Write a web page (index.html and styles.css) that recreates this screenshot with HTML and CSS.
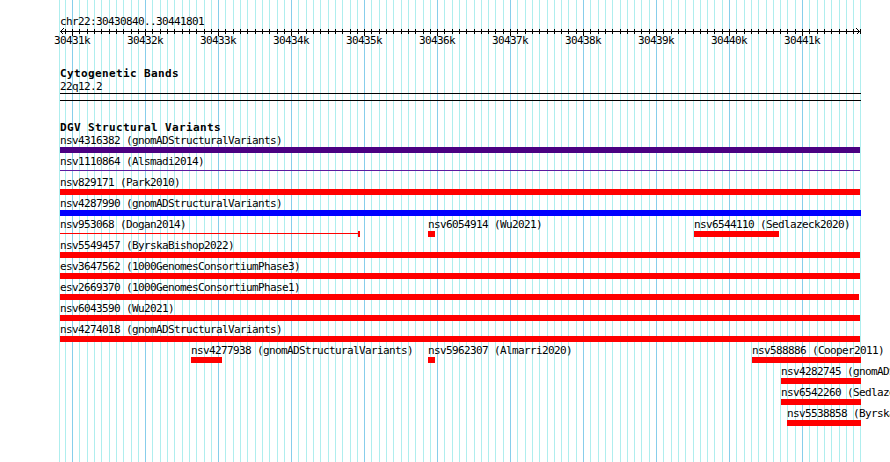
FILE: index.html
```html
<!DOCTYPE html>
<html lang="en">
<head>
    <meta charset="UTF-8">
    <title>chr22:30430840..30441801</title>
    <link rel="stylesheet" href="styles.css">
</head>
<body>
<div class="panel" id="panel">
    <div class="grid" id="grid"></div>
    <div class="content">
        <div class="chrom">chr22:30430840..30441801</div>
        <div class="axis" id="axis">
            <svg class="axis-line" width="801" height="8" viewBox="0 0 801 8">
                <line x1="0" y1="3.5" x2="800" y2="3.5" stroke="#000" stroke-width="1"/>
                <polyline points="3.5,0.5 0.5,3.5 3.5,6.5" fill="none" stroke="#000" stroke-width="1"/>
                <polyline points="796.5,0.5 799.5,3.5 796.5,6.5" fill="none" stroke="#000" stroke-width="1"/>
            </svg>
        </div>

        <div class="track-title">Cytogenetic Bands</div>
        <div class="band-name">22q12.2</div>
        <div class="band"></div>

        <div class="track-title dgv">DGV Structural Variants</div>
        <div class="rows">
            <div class="row">
                <div class="feat" style="left:0"><div class="feat-label">nsv4316382 (gnomADStructuralVariants)</div><div class="bar purple" style="width:800px"></div></div>
            </div>
            <div class="row">
                <div class="feat" style="left:0"><div class="feat-label">nsv1110864 (Alsmadi2014)</div><div class="bar thin purple" style="width:800px"></div></div>
            </div>
            <div class="row">
                <div class="feat" style="left:0"><div class="feat-label">nsv829171 (Park2010)</div><div class="bar red" style="width:800px"></div></div>
            </div>
            <div class="row">
                <div class="feat" style="left:0"><div class="feat-label">nsv4287990 (gnomADStructuralVariants)</div><div class="bar blue" style="width:801px"></div></div>
            </div>
            <div class="row">
                <div class="feat" style="left:0"><div class="feat-label">nsv953068 (Dogan2014)</div><div class="bar thin red end-tick" style="width:300px"></div></div>
                <div class="feat" style="left:368px"><div class="feat-label">nsv6054914 (Wu2021)</div><div class="bar red" style="width:7px"></div></div>
                <div class="feat" style="left:634px"><div class="feat-label">nsv6544110 (Sedlazeck2020)</div><div class="bar red" style="width:85px"></div></div>
            </div>
            <div class="row">
                <div class="feat" style="left:0"><div class="feat-label">nsv5549457 (ByrskaBishop2022)</div><div class="bar red" style="width:800px"></div></div>
            </div>
            <div class="row">
                <div class="feat" style="left:0"><div class="feat-label">esv3647562 (1000GenomesConsortiumPhase3)</div><div class="bar red" style="width:800px"></div></div>
            </div>
            <div class="row">
                <div class="feat" style="left:0"><div class="feat-label">esv2669370 (1000GenomesConsortiumPhase1)</div><div class="bar red" style="width:799px"></div></div>
            </div>
            <div class="row">
                <div class="feat" style="left:0"><div class="feat-label">nsv6043590 (Wu2021)</div><div class="bar red" style="width:800px"></div></div>
            </div>
            <div class="row">
                <div class="feat" style="left:0"><div class="feat-label">nsv4274018 (gnomADStructuralVariants)</div><div class="bar red" style="width:800px"></div></div>
            </div>
            <div class="row">
                <div class="feat" style="left:131px"><div class="feat-label">nsv4277938 (gnomADStructuralVariants)</div><div class="bar red" style="width:31px"></div></div>
                <div class="feat" style="left:368px"><div class="feat-label">nsv5962307 (Almarri2020)</div><div class="bar red" style="width:7px"></div></div>
                <div class="feat" style="left:692px"><div class="feat-label">nsv588886 (Cooper2011)</div><div class="bar red" style="width:109px"></div></div>
            </div>
            <div class="row">
                <div class="feat" style="left:721px"><div class="feat-label">nsv4282745 (gnomADStructuralVariants)</div><div class="bar red" style="width:80px"></div></div>
            </div>
            <div class="row">
                <div class="feat" style="left:721px"><div class="feat-label">nsv6542260 (Sedlazeck2020)</div><div class="bar red" style="width:80px"></div></div>
            </div>
            <div class="row">
                <div class="feat" style="left:727px"><div class="feat-label">nsv5538858 (ByrskaBishop2022)</div><div class="bar red" style="width:74px"></div></div>
            </div>
        </div>
    </div>
</div>
<script src="script.js"></script>
</body>
</html>
```

FILE: styles.css
```css
* {
    margin: 0;
    padding: 0;
    box-sizing: border-box;
}

html,
body {
    overflow: hidden;
    background: #fff;
}

body {
    font-family: "DejaVu Sans Mono", "Liberation Mono", monospace;
    font-size: 11px;
    line-height: 13px;
    letter-spacing: -0.62px;
    color: #000;
}

.panel {
    position: relative;
    min-height: 462px;
}

/* background grid, one line per 100bp */
.grid {
    position: absolute;
    left: 0;
    top: 0;
    bottom: 0;
    width: 100%;
}

.grid .gl {
    position: absolute;
    top: 0;
    bottom: 0;
    width: 1px;
    background: #afeeee;
}

.grid .gl.major {
    background: #87ceeb;
}

.content {
    position: relative;
    padding-left: 60px;
}

.chrom {
    padding-top: 15px;
    height: 28px;
}

.axis {
    position: relative;
    width: 800px;
    height: 39px;
}

.axis-line {
    position: absolute;
    left: 0;
    top: 0;
    display: block;
    shape-rendering: crispEdges;
}

.axis .tick {
    position: absolute;
    top: 1px;
    width: 1px;
    height: 5px;
    background: #000;
}

.axis .tick.major {
    height: 7px;
}

.axis .tick-label {
    position: absolute;
    top: 6px;
    width: 40px;
    margin-left: -20px;
    text-align: center;
    white-space: nowrap;
}

.track-title {
    font-weight: bold;
    letter-spacing: 0.38px;
    height: 13px;
}

.band-name {
    height: 13px;
}

.band {
    width: 801px;
    height: 8px;
    border-top: 1px solid #000;
    border-bottom: 1px solid #000;
}

.track-title.dgv {
    margin-top: 20px;
}

.row {
    position: relative;
    width: 800px;
    height: 21px;
}

.feat {
    position: absolute;
    top: 0;
}

.feat-label {
    height: 13px;
    white-space: nowrap;
}

.bar {
    position: relative;
    height: 6px;
}

.bar.red {
    background: #ff0000;
}

.bar.blue {
    background: #0000ff;
}

.bar.purple {
    background: #4b0082;
}

.bar.thin {
    background: none;
}

.bar.thin::before {
    content: "";
    position: absolute;
    left: 0;
    right: 0;
    top: 2px;
    height: 1px;
}

.bar.thin.purple::before {
    background: #5a1aa0;
}

.bar.thin.red::before {
    background: #ff0000;
}

.bar.end-tick::after {
    content: "";
    position: absolute;
    right: 0;
    top: 0;
    width: 2px;
    height: 6px;
    background: #ff0000;
}
```

FILE: script.js
```js
var start = 30430840;
var end = 30441801;
var trackLeft = 60;
var trackWidth = 800;
var scale = trackWidth / (end - start);

function xOf(bp) {
    return Math.floor(trackLeft + 1 + (bp - start) * scale);
}

var grid = document.getElementById("grid");
var axis = document.getElementById("axis");

//left edge line
var edge = document.createElement("div");
edge.className = "gl";
edge.style.left = "59px";
grid.appendChild(edge);

for (var bp = 30430900; bp <= end; bp += 100) {
    var x = xOf(bp);
    var major = bp % 1000 === 0;

    var gl = document.createElement("div");
    gl.className = major ? "gl major" : "gl";
    gl.style.left = x + "px";
    grid.appendChild(gl);

    var tick = document.createElement("div");
    tick.className = major ? "tick major" : "tick";
    tick.style.left = (x - trackLeft) + "px";
    axis.appendChild(tick);

    if (major) {
        var label = document.createElement("div");
        label.className = "tick-label";
        label.innerHTML = (bp / 1000) + "k";
        label.style.left = (x - trackLeft) + "px";
        axis.appendChild(label);
    }
}
```
